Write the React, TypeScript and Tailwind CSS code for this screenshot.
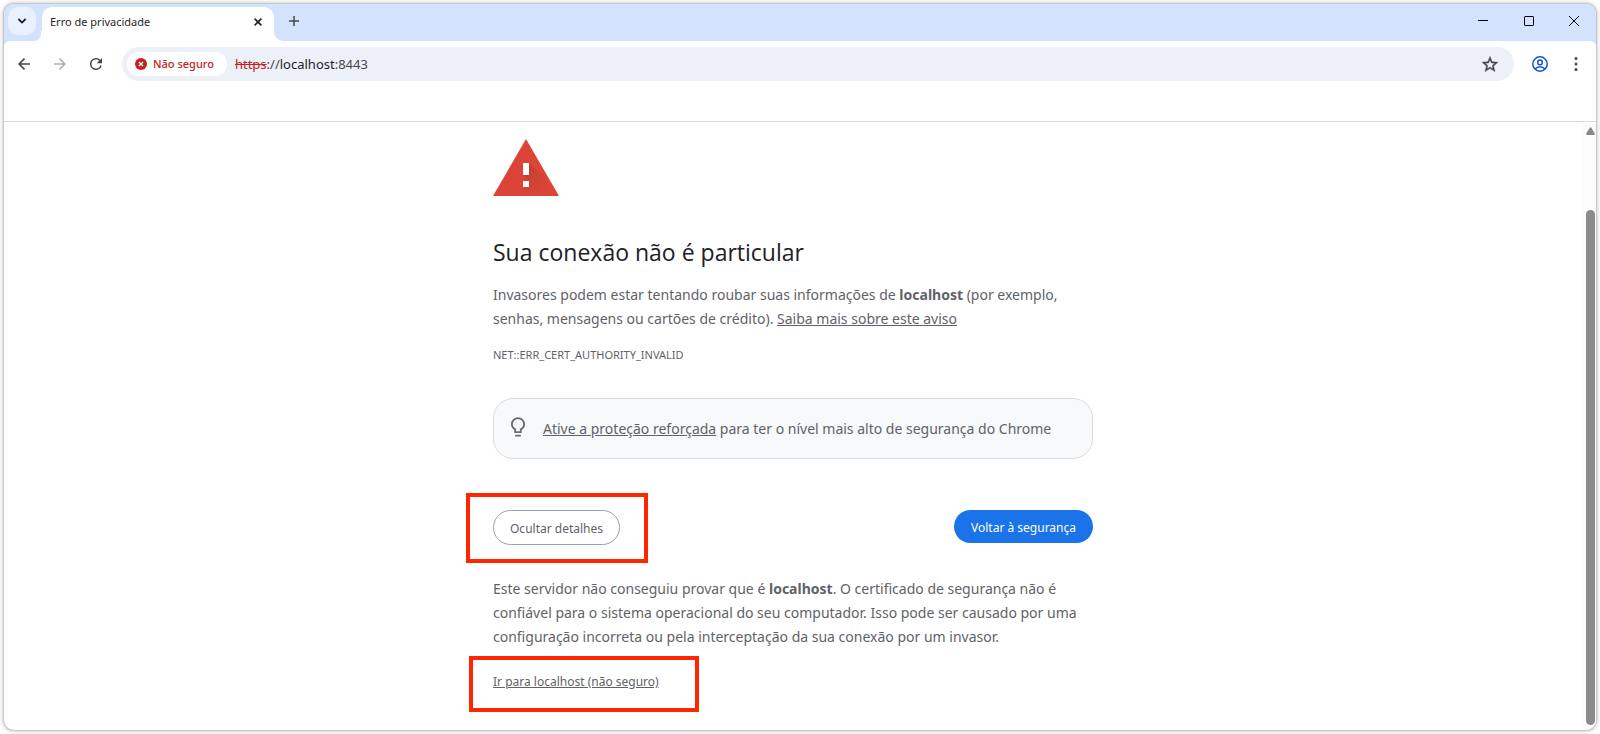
import React from "react";

function TabStrip() {
  return (
    <header className="flex h-[37px] items-start">
      <button
        type="button"
        aria-label="Pesquisar guias"
        className="mt-[3px] ml-1 flex h-7 w-7 items-center justify-center rounded-[10px] bg-[#e9f1fe]"
      >
        <svg width="10" height="10" viewBox="0 0 10 10" fill="none" stroke="#1f1f1f" strokeWidth="1.8">
          <path d="M1.4 3 5 6.6 8.6 3" />
        </svg>
      </button>
      <svg className="mt-[27px] -ml-0.5" width="8" height="10" viewBox="0 0 8 10" fill="#ffffff">
        <path d="M8 0v10H0C4.600 10 7 7 7 2V0z" />
      </svg>
      <div
        role="tab"
        aria-selected="true"
        className="mt-[3px] flex h-[34px] w-[232px] items-center justify-between rounded-t-[10px] bg-white pr-2 pb-1 pl-2"
      >
        <span className="text-[11px] leading-4 text-[#1f1f1f]">Erro de privacidade</span>
        <button type="button" aria-label="Fechar guia" className="flex h-4 w-4 items-center justify-center">
          <svg width="8" height="8" viewBox="0 0 8 8" stroke="#1f1f1f" strokeWidth="1.6">
            <path d="m.6.6 6.800 6.800M7.400.6.6 7.400" />
          </svg>
        </button>
      </div>
      <svg className="mt-[27px]" width="10" height="10" viewBox="0 0 10 10" fill="#ffffff">
        <path d="M0 0c0 6 4 10 10 10H0z" />
      </svg>
      <button type="button" aria-label="Nova guia" className="mt-[10px] ml-[3px] flex h-[14px] w-[14px] items-center justify-center">
        <svg width="10" height="10" viewBox="0 0 10 10" stroke="#474747" strokeWidth="1.500">
          <path d="M5 0v10M0 5h10" />
        </svg>
      </button>
      <div className="ml-auto flex items-center">
        <button type="button" aria-label="Minimizar" className="flex h-[34px] w-[46px] items-center justify-center">
          <svg width="10" height="10" viewBox="0 0 10 10" stroke="#000000">
            <path d="M0 4.500h10" />
          </svg>
        </button>
        <button type="button" aria-label="Maximizar" className="flex h-[34px] w-[46px] items-center justify-center">
          <svg width="10" height="10" viewBox="0 0 10 10" fill="none" stroke="#000000">
            <rect x=".5" y=".5" width="9" height="9" rx=".6" />
          </svg>
        </button>
        <button type="button" aria-label="Fechar" className="flex h-[34px] w-[44px] items-center justify-center">
          <svg width="10" height="10" viewBox="0 0 10 10" stroke="#000000">
            <path d="m0 0 10 10M10 0 0 10" />
          </svg>
        </button>
      </div>
    </header>
  );
}

function Toolbar() {
  return (
    <nav
      aria-label="Barra de ferramentas"
      className="flex h-[81px] items-start rounded-t-md border-b border-[#dcdcdc] bg-white pt-[6px]"
    >
      <button type="button" aria-label="Voltar" className="ml-[10px] flex h-[34px] w-5 items-center justify-center">
        <svg width="12" height="12" viewBox="0 0 12 12" fill="none" stroke="#474747" strokeWidth="1.600">
          <path d="M12 6H1.200M6.500.6 1.100 6l5.400 5.400" />
        </svg>
      </button>
      <button type="button" aria-label="Avançar" className="ml-4 flex h-[34px] w-5 items-center justify-center">
        <svg width="12" height="12" viewBox="0 0 12 12" fill="none" stroke="#b0b0b0" strokeWidth="1.600">
          <path d="M0 6h10.800M5.500.6 10.900 6l-5.400 5.400" />
        </svg>
      </button>
      <button type="button" aria-label="Recarregar" className="ml-4 flex h-[34px] w-5 items-center justify-center">
        <svg width="12" height="12" viewBox="4 4 16 16" fill="#474747">
          <path d="M17.650 6.350A7.960 7.960 0 0 0 12 4a8 8 0 1 0 7.730 10h-2.080A6 6 0 1 1 12 6c1.660 0 3.140.690 4.220 1.780L13 11h7V4z" />
        </svg>
      </button>
      <div className="ml-4 flex h-[34px] flex-1 items-center rounded-full bg-[#ecf0f9] pr-4 pl-[5px]">
        <button type="button" className="flex h-6 items-center gap-[6px] rounded-full bg-white pr-[13px] pl-2">
          <svg width="12" height="12" viewBox="0 0 12 12">
            <circle cx="6" cy="6" r="6" fill="#c5221f" />
            <path d="m4 4 4 4M8 4 4 8" stroke="#ffffff" strokeWidth="1.400" />
          </svg>
          <span className="text-[11px] font-medium leading-4 text-[#c5221f]">Não seguro</span>
        </button>
        <div
          role="textbox"
          aria-label="Endereço"
          contentEditable
          suppressContentEditableWarning
          className="ml-2 flex-1 text-[13px] leading-5 text-[#474747]"
        >
          <span className="text-[#c5221f] line-through">https</span>://<span className="text-[#1f1f1f]">localhost</span>:8443
        </div>
        <button type="button" aria-label="Adicionar aos favoritos" className="flex h-4 w-4 items-center justify-center">
          <svg width="16" height="16" viewBox="2 1.500 20 20" fill="#474747" stroke="#474747" strokeWidth=".5">
            <path d="m22 9.240-7.190-.620L12 2 9.190 8.630 2 9.240l5.460 4.730L5.820 21 12 17.270 18.180 21l-1.630-7.030zM12 15.400l-3.760 2.270 1-4.280-3.320-2.880 4.380-.380L12 6.100l1.710 4.040 4.380.380-3.320 2.880 1 4.280z" />
          </svg>
        </button>
      </div>
      <button type="button" aria-label="Perfil" className="ml-4 flex h-[34px] w-5 items-center justify-center">
        <svg width="16" height="16" viewBox="0 0 16 16" fill="none" stroke="#0b57d0" strokeWidth="1.500">
          <circle cx="8" cy="8" r="7.200" />
          <circle cx="8" cy="6.400" r="2.300" />
          <path d="M3 13.200c1.300-1.600 3-2.400 5-2.400s3.700.8 5 2.400" />
        </svg>
      </button>
      <button type="button" aria-label="Menu" className="mr-[10px] ml-4 flex h-[34px] w-5 items-center justify-center">
        <svg width="4" height="14" viewBox="0 0 4 14" fill="#474747">
          <circle cx="2" cy="1.500" r="1.500" />
          <circle cx="2" cy="7" r="1.500" />
          <circle cx="2" cy="12.500" r="1.500" />
        </svg>
      </button>
    </nav>
  );
}

function WarningTriangle() {
  return (
    <svg width="66" height="57" viewBox="0 0 66 57" aria-hidden="true">
      <defs>
        <linearGradient id="shade" x1="30" y1="24" x2="56" y2="50" gradientUnits="userSpaceOnUse">
          <stop offset="0" stopColor="#b83a2f" />
          <stop offset=".5" stopColor="#d04236" />
          <stop offset="1" stopColor="#db4437" />
        </linearGradient>
      </defs>
      <path d="M33 0 66 57H0z" fill="#db4437" />
      <path d="M36 24 49.500 37.500 61 57H39l-9-9 6-6-6-6z" fill="url(#shade)" />
      <path d="M30 24h6v12h-6zM30 42h6v6h-6z" fill="#ffffff" />
    </svg>
  );
}

function Warning() {
  return (
    <main className="mx-auto w-full max-w-[600px] pt-[17px] text-[14px] leading-6 text-[#5f6368]">
      <WarningTriangle />
      <h1 className="mt-10 font-['Open_Sans','Noto_Sans',sans-serif] text-[23px] leading-8 text-[#202124]">
        Sua conexão não é particular
      </h1>
      <p className="mt-[15px] pr-6">
        Invasores podem estar tentando roubar suas informações de <strong>localhost</strong> (por exemplo, senhas, mensagens ou
        cartões de crédito).{" "}
        <a href="#aviso" className="underline">
          Saiba mais sobre este aviso
        </a>
      </p>
      <p className="mt-3 text-[11px]">NET::ERR_CERT_AUTHORITY_INVALID</p>

      <div className="mt-[31px] flex h-[61px] items-center rounded-[20px] border border-[#dadce0] bg-[#f8f9fa] pl-4">
        <svg className="mb-[3px]" width="16" height="20" viewBox="0 0 16 20" fill="none" stroke="#6b6b6b" strokeWidth="1.800" aria-hidden="true">
          <path d="M5.200 15.100v-2.700C3 11.200 1.900 9.400 1.900 7.200a6.100 6.100 0 0 1 12.200 0c0 2.200-1.100 4-3.300 5.200v2.700zM4.800 15.100h6.400M5.200 18.700h5.600" />
        </svg>
        <p className="ml-[17px]">
          <a href="#protecao" className="underline">
            Ative a proteção reforçada
          </a>{" "}
          para ter o nível mais alto de segurança do Chrome
        </p>
      </div>

      <div className="mt-[51px] flex items-start justify-between text-[12px] leading-5">
        <div className="relative">
          <button type="button" className="h-[35px] rounded-full border border-[#9aa0a6] px-4 pt-0.5">
            Ocultar detalhes
          </button>
          <span className="pointer-events-none absolute -top-[17px] -right-7 -bottom-[18px] -left-[27px] border-4 border-[#ff2600]" />
        </div>
        <button type="button" className="h-[33px] rounded-full bg-[#1a73e8] px-[17px] pt-0.5 text-white">
          Voltar à segurança
        </button>
      </div>

      <p className="mt-8">
        Este servidor não conseguiu provar que é <strong>localhost</strong>. O certificado de segurança não é confiável para o
        sistema operacional do seu computador. Isso pode ser causado por uma configuração incorreta ou pela interceptação da sua
        conexão por um invasor.
      </p>
      <p className="mt-[21px] text-[12px]">
        <span className="relative inline-block">
          <a href="#continuar" className="underline">
            Ir para localhost (não seguro)
          </a>
          <span className="pointer-events-none absolute -top-[14px] -right-10 -bottom-[18px] -left-6 border-4 border-[#ff2600]" />
        </span>
      </p>
    </main>
  );
}

export default function App() {
  return (
    <div className="flex min-h-screen flex-col bg-white p-1 font-['Noto_Sans','Open_Sans',sans-serif]">
      <div className="flex flex-1 flex-col overflow-hidden rounded-[10px] bg-white shadow-[0_0_0_1px_#c8c8c8,0_0_4px_1px_rgba(0,0,0,0.25)]">
        <div className="bg-[#d3e3fd]">
          <TabStrip />
          <Toolbar />
        </div>
        <div className="flex flex-1">
          <div className="flex-1">
            <Warning />
          </div>
          <div className="flex w-[14px] flex-col items-end bg-[#fcfcfc] pt-[5px] pr-px pb-[5px]" aria-hidden="true">
            <svg width="9" height="8" viewBox="0 0 10 8" preserveAspectRatio="none" fill="#8b8b8b">
              <path d="M4 .8Q5-.5 6 .8L9.700 6.500Q10 8 9 8H1Q0 8 .3 6.500z" />
            </svg>
            <div className="mt-[75px] w-[9px] flex-1 rounded-full bg-[#8b8b8b]" />
          </div>
        </div>
      </div>
    </div>
  );
}
